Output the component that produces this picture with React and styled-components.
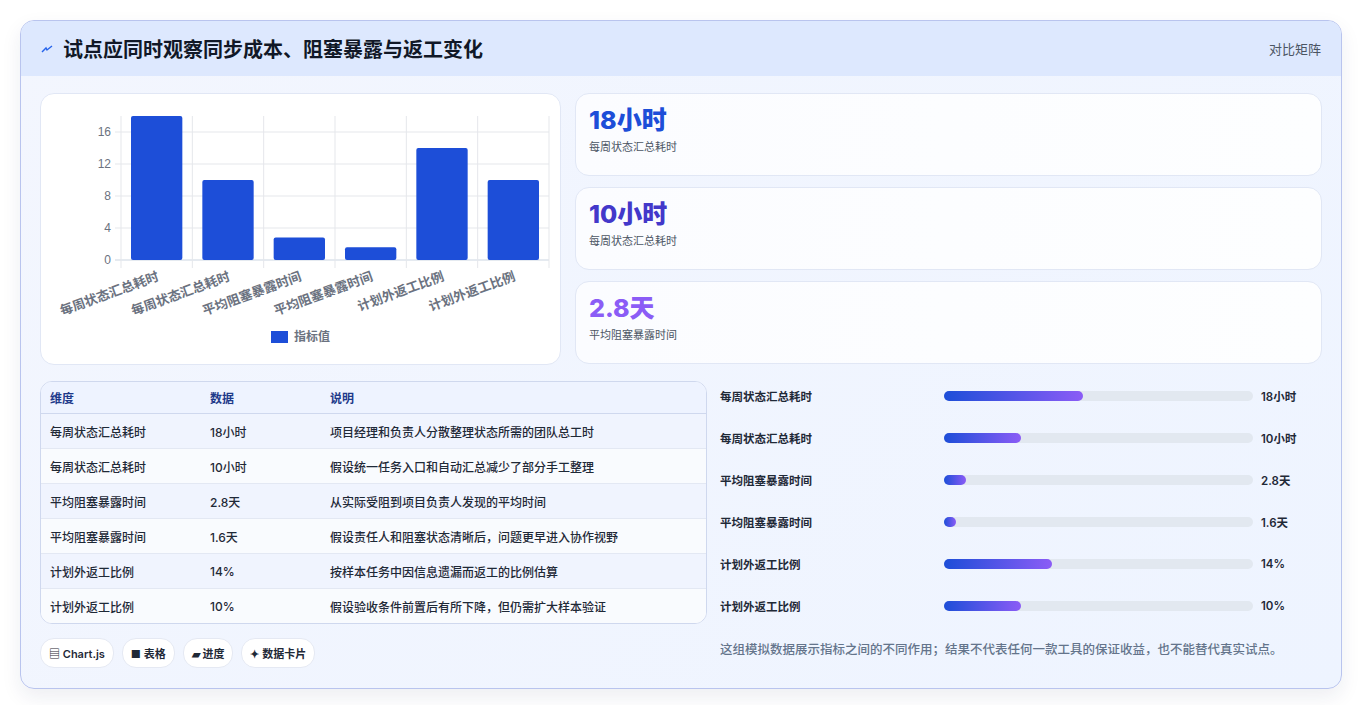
import React from "react";
import styled, { createGlobalStyle } from "styled-components";

const Global = createGlobalStyle`
  body { margin: 0; background: #fff; font-family: Inter, "Noto Sans CJK SC", sans-serif; }
`;

const data = [
  { name: "每周状态汇总耗时", v: 18, label: "18小时", note: "项目经理和负责人分散整理状态所需的团队总工时", pct: 45 },
  { name: "每周状态汇总耗时", v: 10, label: "10小时", note: "假设统一任务入口和自动汇总减少了部分手工整理", pct: 25 },
  { name: "平均阻塞暴露时间", v: 2.8, label: "2.8天", note: "从实际受阻到项目负责人发现的平均时间", pct: 7 },
  { name: "平均阻塞暴露时间", v: 1.6, label: "1.6天", note: "假设责任人和阻塞状态清晰后，问题更早进入协作视野", pct: 4 },
  { name: "计划外返工比例", v: 14, label: "14%", note: "按样本任务中因信息遗漏而返工的比例估算", pct: 35 },
  { name: "计划外返工比例", v: 10, label: "10%", note: "假设验收条件前置后有所下降，但仍需扩大样本验证", pct: 25 },
];

const Page = styled.div`
  padding: 20px 21px 21px 20px;
`;
const Card = styled.div`
  border: 1px solid #b9c4ee;
  border-radius: 14px;
  overflow: hidden;
  background: linear-gradient(135deg, #f3f6fe, #eef4ff);
  box-shadow: 0 8px 20px rgba(30, 40, 90, 0.08);
`;
const Header = styled.div`
  height: 55px;
  background: #dde8fe;
  display: flex;
  align-items: center;
  justify-content: space-between;
  padding: 0 20px;
`;
const Title = styled.h1`
  margin: 0;
  font-size: 20px;
  font-weight: 700;
  color: #111827;
  display: flex;
  align-items: center;
  gap: 10px;
`;
const Tag = styled.span`
  font-size: 13px;
  color: #4b5563;
`;
const Body = styled.div`
  padding: 17px 19px 20px 19px;
  display: grid;
  grid-template-columns: 521px 1fr;
  column-gap: 14px;
  row-gap: 16px;
`;
const Panel = styled.div`
  background: #fff;
  border: 1px solid #e1e7f5;
  border-radius: 14px;
`;
const ChartPanel = styled(Panel)`
  height: 270px;
`;
const Stats = styled.div`
  display: flex;
  flex-direction: column;
  gap: 11px;
`;
const Stat = styled(Panel)`
  height: 83px;
  padding: 12px 13px;
  box-sizing: border-box;
  background: linear-gradient(90deg, #fbfcff, #fdfeff);
`;
const StatValue = styled.div`
  font-size: 25px;
  font-weight: 800;
  color: ${(p) => p.color};
  line-height: 28px;
`;
const StatLabel = styled.div`
  font-size: 11px;
  color: #4b5563;
  margin-top: 4px;
`;
const Bottom = styled.div`
  grid-column: 1 / 3;
  display: grid;
  grid-template-columns: 667px 1fr;
  gap: 13px;
`;
const TableWrap = styled.div`
  border: 1px solid #cfd8ee;
  border-radius: 12px;
  overflow: hidden;
  background: #fff;
`;
const Table = styled.table`
  width: 100%;
  border-collapse: collapse;
  font-size: 12px;
  font-weight: 500;
  color: #1f2937;
  td, th { text-align: left; padding: 0 9px; height: 34px; border-top: 1px solid #e3e8f3; }
  th { height: 31px; border-top: none; color: #1e3a8a; font-weight: 600; background: #eef3ff; border-bottom: 1px solid #cfd8ee; }
  tbody tr:nth-child(odd) { background: #f0f4fe; }
  tbody tr:nth-child(even) { background: #f9fbfe; }
`;
const Chips = styled.div`
  display: flex;
  gap: 8px;
  margin-top: 14px;
`;
const Chip = styled.span`
  font-size: 11px;
  font-weight: 600;
  color: #1f2937;
  background: #fff;
  border: 1px solid #e5e9f3;
  border-radius: 14px;
  padding: 6px 8px;
`;
const Bars = styled.div`
  display: flex;
  flex-direction: column;
  margin-top: -6px;
`;
const BarRow = styled.div`
  display: grid;
  grid-template-columns: 216px 309px 1fr;
  align-items: center;
  height: 42px;
  column-gap: 8px;
  font-size: 11.5px;
  font-weight: 600;
  color: #1f2937;
`;
const Track = styled.div`
  height: 10px;
  border-radius: 5px;
  background: #e2e8f0;
`;
const Fill = styled.div`
  height: 100%;
  border-radius: 5px;
  min-width: 12px;
  background: linear-gradient(90deg, #1d4ed8, #8b5cf6);
`;
const Note = styled.p`
  margin: 12px 0 0;
  font-size: 12.5px;
  color: #64748b;
  font-weight: 500;
`;

function Chart() {
  const x0 = 80, x1 = 508, y0 = 166, unit = 8;
  const w = (x1 - x0) / 6;
  const ticks = [0, 4, 8, 12, 16];
  return (
    <svg width="521" height="270" style={{ display: "block" }}>
      {ticks.map((t) => (
        <g key={t}>
          <line x1={x0 - 6} x2={x1} y1={y0 - t * unit} y2={y0 - t * unit} stroke={t === 0 ? "#cbd5e1" : "#e5e7eb"} />
          <text x={x0 - 10} y={y0 - t * unit + 4} textAnchor="end" fontSize="12" fill="#6b7280" fontFamily="Liberation Sans, sans-serif">{t}</text>
        </g>
      ))}
      {Array.from({ length: 7 }).map((_, i) => (
        <line key={i} x1={x0 + i * w} x2={x0 + i * w} y1={22} y2={y0 + 8} stroke="#e5e7eb" />
      ))}
      {data.map((d, i) => (
        <g key={i}>
          <rect x={x0 + i * w + 10} y={y0 - d.v * unit} width={w - 20} height={d.v * unit} rx="2" fill="#1d4ed8" />
          <text transform={`translate(${x0 + i * w + w / 2 + 3},${y0 + 20}) rotate(-20)`} textAnchor="end" fontSize="13" fontWeight="700" fill="#6b7280">{d.name}</text>
        </g>
      ))}
      <rect x="230" y="237" width="17" height="12" fill="#1d4ed8" />
      <text x="253" y="247" fontSize="12" fill="#6b7280" fontWeight="600">指标值</text>
    </svg>
  );
}

export default function App() {
  return (
    <Page>
      <Global />
      <Card>
        <Header>
          <Title>
            <svg width="12" height="10" viewBox="0 0 12 10"><path d="M1 8 L5 4 L6 6 L11 2" stroke="#2563eb" strokeWidth="1.4" fill="none" /></svg>
            试点应同时观察同步成本、阻塞暴露与返工变化
          </Title>
          <Tag>对比矩阵</Tag>
        </Header>
        <Body>
          <ChartPanel><Chart /></ChartPanel>
          <Stats>
            <Stat><StatValue color="#1d4ed8">18小时</StatValue><StatLabel>每周状态汇总耗时</StatLabel></Stat>
            <Stat><StatValue color="#4338ca">10小时</StatValue><StatLabel>每周状态汇总耗时</StatLabel></Stat>
            <Stat><StatValue color="#8b5cf6">2.8天</StatValue><StatLabel>平均阻塞暴露时间</StatLabel></Stat>
          </Stats>
          <Bottom>
            <div>
              <TableWrap>
                <Table>
                  <colgroup><col style={{ width: 160 }} /><col style={{ width: 120 }} /><col /></colgroup>
                  <thead><tr><th>维度</th><th>数据</th><th>说明</th></tr></thead>
                  <tbody>
                    {data.map((d, i) => (
                      <tr key={i}><td>{d.name}</td><td>{d.label}</td><td>{d.note}</td></tr>
                    ))}
                  </tbody>
                </Table>
              </TableWrap>
              <Chips>
                <Chip>▤ Chart.js</Chip>
                <Chip>■ 表格</Chip>
                <Chip>▰ 进度</Chip>
                <Chip>✦ 数据卡片</Chip>
              </Chips>
            </div>
            <Bars>
              {data.map((d, i) => (
                <BarRow key={i}>
                  <span>{d.name}</span>
                  <Track><Fill style={{ width: `${d.pct}%` }} /></Track>
                  <span>{d.label}</span>
                </BarRow>
              ))}
              <Note>这组模拟数据展示指标之间的不同作用；结果不代表任何一款工具的保证收益，也不能替代真实试点。</Note>
            </Bars>
          </Bottom>
        </Body>
      </Card>
    </Page>
  );
}
